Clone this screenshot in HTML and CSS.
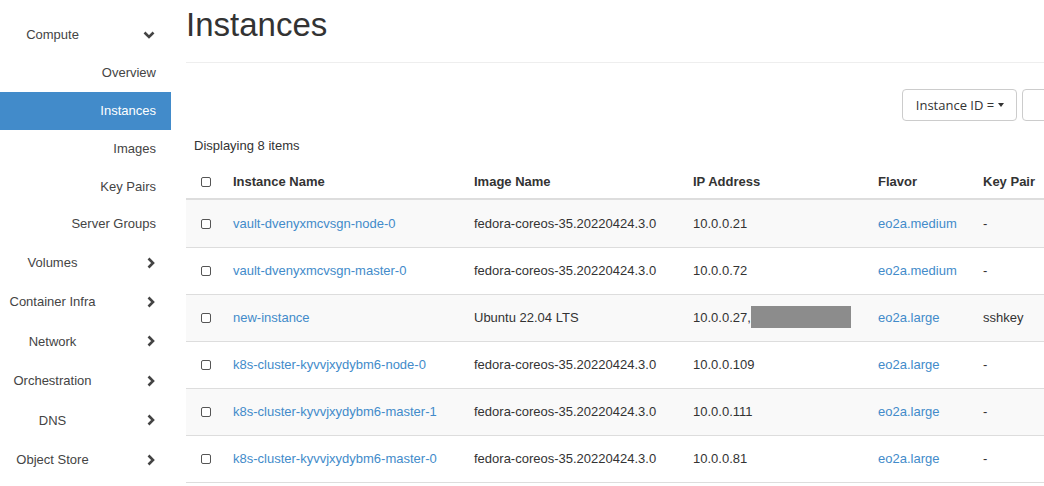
FILE: index.html
```html
<!DOCTYPE html>
<html>
<head>
<meta charset="utf-8">
<link rel="stylesheet" href="styles.css">
</head>
<body>
<div class="page">
  <nav class="sidebar">
    <div class="nav-top"><span class="nav-label">Compute</span><svg class="chev-down" width="12" height="8" viewBox="0 0 12 8"><path d="M1.5 1.5 L6 6 L10.5 1.5" fill="none" stroke="#444" stroke-width="2.6"/></svg></div>
    <div class="nav-sub">Overview</div>
    <div class="nav-sub active">Instances</div>
    <div class="nav-sub">Images</div>
    <div class="nav-sub">Key Pairs</div>
    <div class="nav-sub">Server Groups</div>
    <div class="nav-top"><span class="nav-label">Volumes</span><svg class="chev-right" width="8" height="12" viewBox="0 0 8 12"><path d="M1.5 1.5 L6 6 L1.5 10.5" fill="none" stroke="#444" stroke-width="2.6"/></svg></div>
    <div class="nav-top"><span class="nav-label">Container Infra</span><svg class="chev-right" width="8" height="12" viewBox="0 0 8 12"><path d="M1.5 1.5 L6 6 L1.5 10.5" fill="none" stroke="#444" stroke-width="2.6"/></svg></div>
    <div class="nav-top"><span class="nav-label">Network</span><svg class="chev-right" width="8" height="12" viewBox="0 0 8 12"><path d="M1.5 1.5 L6 6 L1.5 10.5" fill="none" stroke="#444" stroke-width="2.6"/></svg></div>
    <div class="nav-top"><span class="nav-label">Orchestration</span><svg class="chev-right" width="8" height="12" viewBox="0 0 8 12"><path d="M1.5 1.5 L6 6 L1.5 10.5" fill="none" stroke="#444" stroke-width="2.6"/></svg></div>
    <div class="nav-top"><span class="nav-label">DNS</span><svg class="chev-right" width="8" height="12" viewBox="0 0 8 12"><path d="M1.5 1.5 L6 6 L1.5 10.5" fill="none" stroke="#444" stroke-width="2.6"/></svg></div>
    <div class="nav-top"><span class="nav-label">Object Store</span><svg class="chev-right" width="8" height="12" viewBox="0 0 8 12"><path d="M1.5 1.5 L6 6 L1.5 10.5" fill="none" stroke="#444" stroke-width="2.6"/></svg></div>
  </nav>
  <main class="main">
    <div class="page-header"><h1>Instances</h1></div>
    <div class="toolbar">
      <button class="filter-btn">Instance ID = <span class="caret"></span></button>
      <div class="filter-input"></div>
    </div>
    <div class="count">Displaying 8 items</div>
    <table class="table">
      <colgroup>
        <col class="c-check"><col class="c-name"><col class="c-image"><col class="c-ip"><col class="c-flavor"><col class="c-key">
      </colgroup>
      <thead>
        <tr><th class="chk"><span class="checkbox"></span></th><th>Instance Name</th><th>Image Name</th><th>IP Address</th><th>Flavor</th><th>Key Pair</th></tr>
      </thead>
      <tbody>
        <tr><td class="chk"><span class="checkbox"></span></td><td><a>vault-dvenyxmcvsgn-node-0</a></td><td>fedora-coreos-35.20220424.3.0</td><td>10.0.0.21</td><td><a>eo2a.medium</a></td><td>-</td></tr>
        <tr><td class="chk"><span class="checkbox"></span></td><td><a>vault-dvenyxmcvsgn-master-0</a></td><td>fedora-coreos-35.20220424.3.0</td><td>10.0.0.72</td><td><a>eo2a.medium</a></td><td>-</td></tr>
        <tr><td class="chk"><span class="checkbox"></span></td><td><a>new-instance</a></td><td>Ubuntu 22.04 LTS</td><td>10.0.0.27,<span class="redacted"></span></td><td><a>eo2a.large</a></td><td>sshkey</td></tr>
        <tr><td class="chk"><span class="checkbox"></span></td><td><a>k8s-cluster-kyvvjxydybm6-node-0</a></td><td>fedora-coreos-35.20220424.3.0</td><td>10.0.0.109</td><td><a>eo2a.large</a></td><td>-</td></tr>
        <tr><td class="chk"><span class="checkbox"></span></td><td><a>k8s-cluster-kyvvjxydybm6-master-1</a></td><td>fedora-coreos-35.20220424.3.0</td><td>10.0.0.111</td><td><a>eo2a.large</a></td><td>-</td></tr>
        <tr><td class="chk"><span class="checkbox"></span></td><td><a>k8s-cluster-kyvvjxydybm6-master-0</a></td><td>fedora-coreos-35.20220424.3.0</td><td>10.0.0.81</td><td><a>eo2a.large</a></td><td>-</td></tr>
      </tbody>
    </table>
  </main>
</div>
</body>
</html>
```
FILE: styles.css
```css
html, body {
  margin: 0;
  padding: 0;
  background: #fff;
  overflow: hidden;
}
body {
  font-family: "Liberation Sans", Arial, sans-serif;
  font-size: 13px;
  color: #333;
  width: 1044px;
  height: 486px;
}
.page {
  display: flex;
  align-items: flex-start;
}
.sidebar {
  width: 171px;
  flex: none;
  padding-top: 15px;
  color: #444;
}
.nav-top {
  display: flex;
  align-items: center;
  padding: 10px 0;
  line-height: 19.4px;
}
.nav-label {
  width: 105px;
  text-align: center;
  white-space: nowrap;
}
.chev-down {
  margin-left: 38px;
}
.chev-right {
  margin-left: 42px;
}
.nav-sub {
  padding: 10px 15px 10px 0;
  line-height: 17.7px;
  text-align: right;
}
.nav-sub.active {
  background: #428bca;
  color: #fff;
}
.main {
  flex: none;
  width: 1036px;
  margin-left: 15px;
}
.page-header {
  border-bottom: 1px solid #eee;
  padding-bottom: 17px;
}
.page-header h1 {
  margin: 5px 0 0 0;
  font-size: 33px;
  line-height: 40px;
  font-weight: 400;
  color: #333;
}
.toolbar {
  display: flex;
  justify-content: flex-end;
  gap: 5px;
  margin-top: 26px;
}
.filter-btn {
  box-sizing: border-box;
  height: 32px;
  width: 115px;
  border: 1px solid #ccc;
  border-radius: 4px;
  background: #fff;
  font-family: "Open Sans", "Noto Sans", sans-serif;
  font-size: 13px;
  color: #333;
  padding: 0 0 0 1px;
  display: flex;
  align-items: center;
  justify-content: center;
}
.caret {
  display: inline-block;
  width: 0;
  height: 0;
  border-left: 3.5px solid transparent;
  border-right: 3.5px solid transparent;
  border-top: 4px solid #333;
  margin-left: 4px;
}
.filter-input {
  box-sizing: border-box;
  width: 200px;
  height: 32px;
  border: 1px solid #ccc;
  border-radius: 4px 0 0 4px;
}
.count {
  margin-top: 16px;
  padding-left: 8px;
  line-height: 18px;
}
.table {
  margin-top: 9px;
  width: 100%;
  table-layout: fixed;
  border-collapse: separate;
  border-spacing: 0;
}
.c-check { width: 39px; }
.c-name { width: 241px; }
.c-image { width: 219px; }
.c-ip { width: 185px; }
.c-flavor { width: 105px; }
.table th {
  text-align: left;
  font-weight: 700;
  padding: 9px 8px 7px;
  line-height: 18px;
  border-bottom: 2px solid #ddd;
  white-space: nowrap;
}
.table td {
  padding: 14px 8px;
  line-height: 18px;
  height: 18px;
  border-top: 1px solid #ddd;
  white-space: nowrap;
  vertical-align: top;
}
.table tbody tr:first-child td {
  border-top: 0;
  padding-top: 15px;
}
.table tbody tr:last-child td {
  border-bottom: 1px solid #ddd;
}
.table tbody tr:nth-child(odd) td {
  background: #f9f9f9;
}
.table .chk {
  text-align: center;
  padding-left: 0;
  padding-right: 0;
}
.checkbox {
  display: inline-block;
  width: 8px;
  height: 8px;
  border: 1.5px solid #555;
  border-radius: 2px;
  vertical-align: -1px;
  background: #fff;
}
.table a {
  color: #428bca;
  text-decoration: none;
}
.redacted {
  display: inline-block;
  width: 100px;
  height: 22px;
  background: #8c8c8c;
  vertical-align: top;
  margin-top: -3px;
  margin-bottom: -1px;
}
```
